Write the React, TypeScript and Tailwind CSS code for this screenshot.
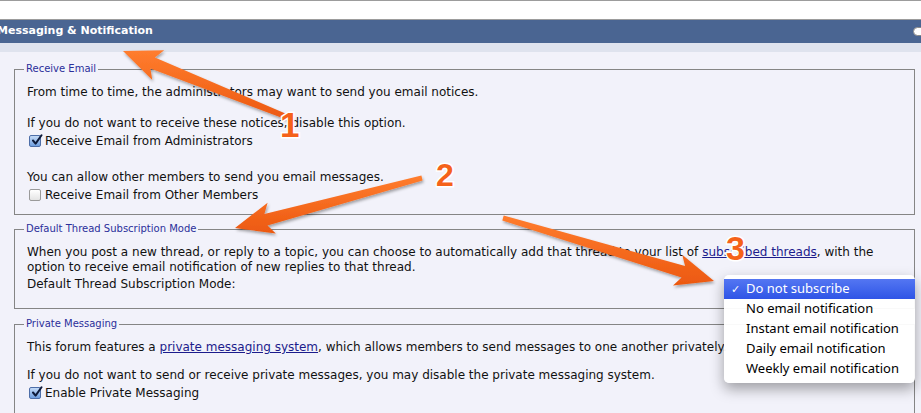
import React from 'react'

type Pt = [number, number]

// tapered arrow with swept-back barbs, tail -> tip
function arrowPoints(tail: Pt, tip: Pt, hl = 32, hw = 16, sw = 6, tw = 2.5) {
  const [tx, ty] = tail
  const [px, py] = tip
  const L = Math.hypot(px - tx, py - ty)
  const ux = (px - tx) / L
  const uy = (py - ty) / L
  const nx = -uy
  const ny = ux
  const bx = px - ux * hl
  const by = py - uy * hl
  const back = 6
  const pts: Pt[] = [
    [tx + nx * tw, ty + ny * tw],
    [bx + nx * sw, by + ny * sw],
    [bx - ux * back + nx * hw, by - uy * back + ny * hw],
    [px, py],
    [bx - ux * back - nx * hw, by - uy * back - ny * hw],
    [bx - nx * sw, by - ny * sw],
    [tx - nx * tw, ty - ny * tw],
  ]
  return pts.map(p => `${p[0].toFixed(1)},${p[1].toFixed(1)}`).join(' ')
}

const arrows: { tail: Pt; tip: Pt }[] = [
  { tail: [292, 119], tip: [123, 51] },
  { tail: [422, 178], tip: [235, 228] },
  { tail: [503, 218], tip: [714, 281] },
]

const Checkbox: React.FC<{ checked?: boolean }> = ({ checked }) => (
  checked ? (
    <span className="relative mr-[4px] inline-flex h-[12px] w-[12px] shrink-0 items-center justify-center rounded-[2px] border border-[#4d6ea8] bg-gradient-to-b from-[#c4daf6] to-[#6f9edf]">
      <svg viewBox="0 0 12 12" className="absolute left-[1px] top-[-2px] h-[12px] w-[12px]">
        <path d="M2 6.5 L4.6 9.6 L10.5 1.2" fill="none" stroke="#0d1a3a" strokeWidth="2" strokeLinecap="round" strokeLinejoin="round" />
      </svg>
    </span>
  ) : (
    <span className="mr-[4px] inline-block h-[12px] w-[12px] shrink-0 rounded-[2px] border border-[#9a9a9a] bg-gradient-to-b from-white to-[#e4e4e4]" />
  )
)

const Section: React.FC<{ legend: string; className?: string; children: React.ReactNode }> = ({ legend, className, children }) => (
  <fieldset className={`ml-[14px] mr-[6px] border border-[#858585] px-[12px] ${className ?? ''}`}>
    <legend className="ml-[-3px] px-[2px] text-[10px] leading-[12px] text-[#2b2f9a]">{legend}</legend>
    {children}
  </fieldset>
)

const menuItems = ['Do not subscribe', 'No email notification', 'Instant email notification', 'Daily email notification', 'Weekly email notification']

export default function App() {
  return (
    <div className="relative h-[413px] w-[921px] overflow-hidden bg-[#f2f2fa] text-[12px] text-[#111]" style={{ fontFamily: '"DejaVu Sans", Verdana, sans-serif' }}>
      <div className="h-[20px] border-t border-b border-[#9c9c9c] bg-white" />
      <div className="flex h-[23px] items-center justify-between bg-[#4a6592]">
        <span className="ml-[-3px] text-[11px] font-bold text-white">Messaging &amp; Notification</span>
        <span className="mr-[-6px] h-[9px] w-[14px] rounded-full border border-[#8a8a8a] bg-white" />
      </div>
      <div className="h-[9px] bg-[#dfe3ee]" />

      <div className="pt-[11px]">
        <Section legend="Receive Email" className="pt-[8px] pb-[10px]">
          <div className="leading-[18px]">From time to time, the administrators may want to send you email notices.</div>
          <div className="mt-[13px] leading-[18px]">If you do not want to receive these notices, disable this option.</div>
          <label className="flex h-[18px] items-center pl-[2px]"><Checkbox checked />Receive Email from Administrators</label>
          <div className="mt-[18px] leading-[18px]">You can allow other members to send you email messages.</div>
          <label className="flex h-[18px] items-center pl-[2px]"><Checkbox />Receive Email from Other Members</label>
        </Section>

        <Section legend="Default Thread Subscription Mode" className="mt-[8px] pt-[10px] pb-[15px]">
          <p className="leading-[15px]">
            When you post a new thread, or reply to a topic, you can choose to automatically add that thread to your list of{' '}
            <a className="text-[#1c1c8c] underline">subscribed threads</a>, with the<br />
            option to receive email notification of new replies to that thread.
          </p>
          <div className="leading-[18px]">Default Thread Subscription Mode:</div>
        </Section>

        <Section legend="Private Messaging" className="mt-[9px] pt-[8px] pb-[20px]">
          <div className="leading-[18px]">
            This forum features a <a className="text-[#1c1c8c] underline">private messaging system</a>, which allows members to send messages to one another privately.
          </div>
          <div className="mt-[10px] leading-[18px]">If you do not want to send or receive private messages, you may disable the private messaging system.</div>
          <label className="flex h-[18px] items-center pl-[2px]"><Checkbox checked />Enable Private Messaging</label>
        </Section>
      </div>

      <div className="absolute left-[724px] top-[275px] w-[191px] rounded-[5px] bg-white/95 py-[4px] text-[13px] shadow-[0_6px_14px_rgba(0,0,0,0.35)]" style={{ fontFamily: '"Noto Sans", "DejaVu Sans", sans-serif' }}>
        {menuItems.map((item, i) => (
          <div key={item} className={`flex h-[20px] items-center ${i === 0 ? 'bg-gradient-to-b from-[#5476f2] to-[#2f54e6] text-white' : 'text-black'}`}>
            <span className="w-[22px] pl-[7px] text-[11px]">{i === 0 ? '✓' : ''}</span>
            <span>{item}</span>
          </div>
        ))}
      </div>

      <svg className="pointer-events-none absolute left-0 top-0 h-[413px] w-[921px]" viewBox="0 0 921 413">
        <defs>
          <linearGradient id="orange" x1="0" y1="0" x2="0" y2="1">
            <stop offset="0" stopColor="#ff7d2e" />
            <stop offset="1" stopColor="#ec5810" />
          </linearGradient>
          <filter id="shadow" x="-20%" y="-20%" width="140%" height="140%">
            <feDropShadow dx="1" dy="2" stdDeviation="1.5" floodColor="#000" floodOpacity="0.35" />
          </filter>
        </defs>
        {arrows.map((a, i) => (
          <polygon key={i} points={arrowPoints(a.tail, a.tip)} fill="url(#orange)" filter="url(#shadow)" strokeLinejoin="round" />
        ))}
        <g fontFamily='"Liberation Sans", Arial, sans-serif' fontWeight="bold" fill="#f5621a" stroke="#fff" strokeWidth="3" style={{ paintOrder: 'stroke' }}>
          <text x="280" y="137" fontSize="35">1</text>
          <text x="436" y="186" fontSize="32">2</text>
          <text x="726" y="260" fontSize="34">3</text>
        </g>
      </svg>
    </div>
  )
}
